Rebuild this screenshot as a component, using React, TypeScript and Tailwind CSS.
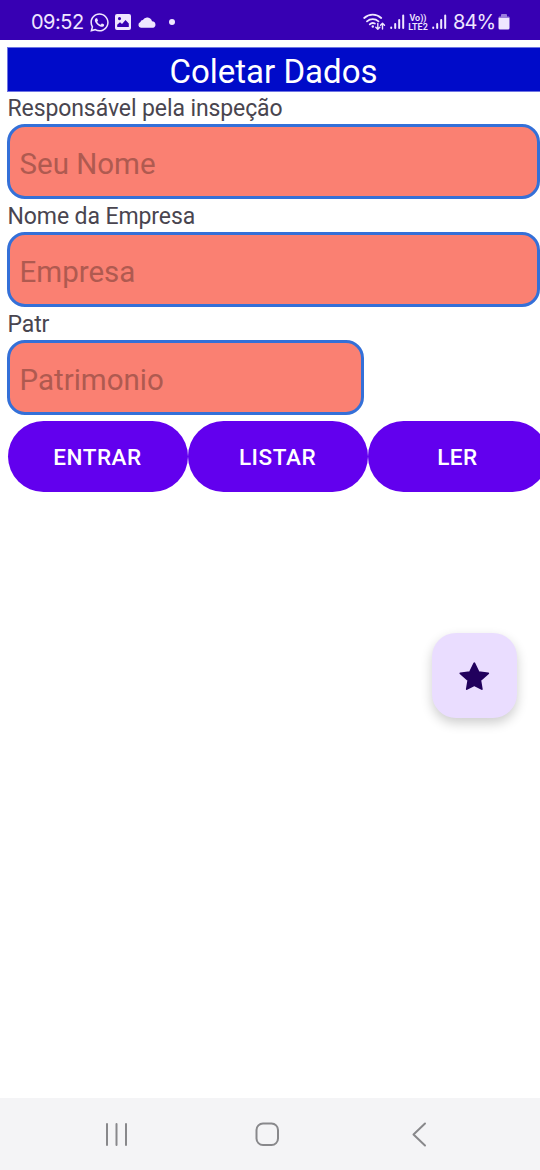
import { FaWhatsapp } from "react-icons/fa";

type FieldProps = {
  label: string;
  placeholder: string;
  width: string;
};

const actions = ["Entrar", "Listar", "Ler"];

function SignalBars({ className }: { className: string }) {
  return (
    <svg className={className} width="15" height="16" viewBox="0 0 15 16" fill="none" stroke="currentColor" strokeWidth="2" strokeLinecap="round">
      <path d="M1.2 13.500v.5M5.2 10v4M9.200 6v8M13.200 1.500v12.500" />
    </svg>
  );
}

function StatusBar() {
  return (
    <header className="flex h-10 items-center justify-between bg-[#3700b3] pr-[30px] pl-[31px] font-['Inter',sans-serif] text-[#efe6ff]">
      <div className="flex h-full items-center pt-1">
        <span className="w-[53px] text-[20px] leading-6 tracking-[-0.500px] whitespace-nowrap">09:52</span>
        <FaWhatsapp className="ml-[5px]" size={21} />
        <svg className="ml-[5px]" width="16" height="16" viewBox="0 0 16 16">
          <path
            fill="currentColor"
            fillRule="evenodd"
            d="M2 0h12a2 2 0 0 1 2 2v12a2 2 0 0 1-2 2H2a2 2 0 0 1-2-2V2a2 2 0 0 1 2-2ZM4.500 3a1.600 1.600 0 1 0 0 3.200 1.600 1.600 0 0 0 0-3.200ZM2.200 13h11.600V9.500L10.500 6 7 10 5 8.300l-2.800 2.500Z"
          />
        </svg>
        <svg className="ml-[7px]" width="18" height="11" viewBox="0 0 18 11" fill="currentColor">
          <path d="M3 10.800a3 3 0 0 1-.6-5.800 2.800 2.800 0 0 1 2.400-2A5 5 0 0 1 14 4.200a3.400 3.400 0 0 1 1.200 6.600Z" />
        </svg>
        <span className="ml-[13px] size-[6px] rounded-full bg-[#efe6ff]" />
      </div>

      <div className="flex h-full items-center pt-1">
        <svg width="23" height="18" viewBox="0 0 23 18" fill="none" stroke="currentColor" strokeWidth="1.800" strokeLinecap="round" strokeLinejoin="round">
          <path d="M1.200 5a12.500 12.500 0 0 1 17 0M4 8.300a8.500 8.500 0 0 1 11.500 0M6.800 11.300a4.500 4.500 0 0 1 5-.8" />
          <circle cx="9.800" cy="13.500" r="1.200" fill="currentColor" stroke="none" />
          <path strokeWidth="1.400" d="M14.800 10.500v5.500M12.800 14.300l2 2 2-2M19.500 16v-5.500M17.500 12.200l2-2 2 2" />
        </svg>
        <SignalBars className="ml-1" />
        <div className="ml-[3px] flex w-5 flex-col items-center font-['Roboto',sans-serif] text-[9px] leading-[10px] font-semibold whitespace-nowrap">
          <span className="block h-[9px]">Vo))</span>
          <span className="block h-[9px]">LTE2</span>
        </div>
        <SignalBars className="ml-1" />
        <span className="ml-[6px] w-[42px] text-[20px] leading-6 tracking-[-0.900px] whitespace-nowrap">84%</span>
        <svg className="ml-[3px]" width="12" height="16" viewBox="0 0 12 16" fill="currentColor">
          <path opacity=".55" d="M3 2.500V1a1 1 0 0 1 1-1h4a1 1 0 0 1 1 1v1.500h1.500A1 1 0 0 1 11.500 4H.5a1.500 1.500 0 0 1 1-1.500Z" />
          <path d="M.5 4h11v10a1.500 1.500 0 0 1-1.500 1.500H2A1.500 1.500 0 0 1 .5 14Z" />
        </svg>
      </div>
    </header>
  );
}

function Field({ label, placeholder, width }: FieldProps) {
  return (
    <label className="block">
      <span className="block h-[33px] pl-[0.500px] text-[23px] leading-[35px] tracking-[-0.100px] text-[#49454f]">{label}</span>
      <input
        type="text"
        placeholder={placeholder}
        className={`block h-[75px] rounded-[18px] border-[3px] border-[#3470d8] bg-[#fa8072] pt-1 pl-[9.500px] text-[29.500px] placeholder:text-[#af5a50] placeholder:opacity-100 ${width}`}
      />
    </label>
  );
}

function NavigationBar() {
  return (
    <nav className="flex h-[72px] items-center bg-[#f4f4f6] pl-[104px] text-[#88888b]">
      <svg width="25" height="26" viewBox="0 0 25 26" fill="none" stroke="currentColor" strokeWidth="2" strokeLinecap="round">
        <path d="M3 3v21M12.500 3v21M22 3v21" />
      </svg>
      <svg className="ml-[125px]" width="26" height="26" viewBox="0 0 26 26" fill="none" stroke="currentColor" strokeWidth="2">
        <rect x="2.500" y="2.500" width="21.500" height="21.500" rx="6.500" />
      </svg>
      <svg className="ml-[128px]" width="24" height="26" viewBox="0 0 24 26" fill="none" stroke="currentColor" strokeWidth="2" strokeLinecap="round" strokeLinejoin="round">
        <path d="M17 2.500 5.500 13.500 17 24.500" />
      </svg>
    </nav>
  );
}

export default function App() {
  return (
    <div className="flex h-[1170px] w-[540px] flex-col overflow-hidden bg-white font-['Roboto',sans-serif]">
      <StatusBar />

      <main className="flex flex-1 flex-col pt-[7px] pl-[7px]">
        <h1 className="h-[45px] border-y border-l border-[#6f75e2] bg-[#000bc9] pr-px text-center text-[33px] leading-[47px] text-white">
          Coletar Dados
        </h1>

        <div className="-mt-px">
          <Field label="Responsável pela inspeção" placeholder="Seu Nome" width="w-full" />
          <Field label="Nome da Empresa" placeholder="Empresa" width="w-full" />
          <Field label="Patr" placeholder="Patrimonio" width="w-[357px]" />
        </div>

        <div className="mt-[6px] ml-[0.500px] flex">
          {actions.map((action) => (
            <button
              key={action}
              type="button"
              className="h-[71px] w-[180px] shrink-0 rounded-full bg-[#6200ee] pt-[2px] text-[22.500px] font-medium tracking-[0.550px] text-white uppercase"
            >
              {action}
            </button>
          ))}
        </div>

        <button
          type="button"
          aria-label="Favorito"
          className="mt-[141px] mr-[23.500px] flex size-[85px] items-center justify-center self-end rounded-[24px] bg-[#eaddff] text-[#21005d] shadow-[0_5px_12px_rgba(0,0,0,0.2)]"
        >
          <svg width="36" height="36" viewBox="0 0 24 24" fill="currentColor" stroke="currentColor" strokeWidth="1.200" strokeLinejoin="round">
            <path d="m12.200 18.200 5 2.500-1-5.900 5.300-4.600-6.400-.8L12.200 3.500 9.300 9.400l-6.400.8 5.300 4.600-1 5.900Z" />
          </svg>
        </button>
      </main>

      <NavigationBar />
    </div>
  );
}
